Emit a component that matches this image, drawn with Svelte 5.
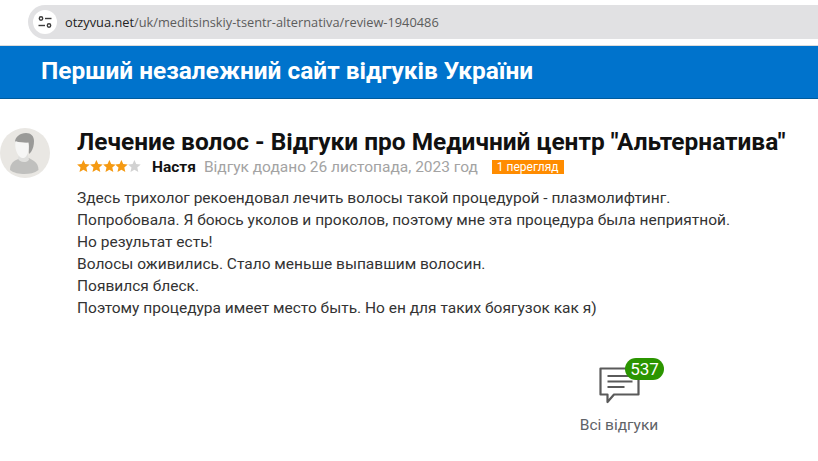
<script lang="ts">
	let paragraphs = [
		'Здесь трихолог рекоендовал лечить волосы такой процедурой - плазмолифтинг.',
		'Попробовала. Я боюсь уколов и проколов, поэтому мне эта процедура была неприятной.',
		'Но результат есть!',
		'Волосы оживились. Стало меньше выпавшим волосин.',
		'Появился блеск.',
		'Поэтому процедура имеет место быть. Но ен для таких боягузок как я)'
	];
	let rating = 4;
</script>

<div class="page">
	<div class="browser">
		<div class="urlbar">
			<span class="tune">
				<svg width="16" height="16" viewBox="0 0 16 16" fill="none" stroke="#3c3c3c" stroke-width="1.4">
					<circle cx="4" cy="4.500" r="1.7" />
					<path d="M8 4.500h6.500" />
					<path d="M1.500 11.500h6.500" />
					<circle cx="12" cy="11.500" r="1.7" />
				</svg>
			</span>
			<span class="url"><span class="host">otzyvua.net</span>/uk/meditsinskiy-tsentr-alternativa/review-1940486</span>
		</div>
	</div>

	<header class="banner">Перший незалежний сайт відгуків України</header>

	<main class="review">
		<div class="avatar">
			<svg width="50" height="50" viewBox="0 0 50 50">
				<circle cx="25" cy="25" r="25" fill="#e9e7e3" />
				<!-- shirt -->
				<path d="M10 42c0-5 2-8 6-10l5-2h8l5 3c3 2 4.500 5 4.500 9-4 3-9 4-14 4s-11-1-14.500-4z" fill="#c0c0be" />
				<path d="M18 30.500c1 4 9 5 11 1l-1.500-6h-8z" fill="#e0e0de" />
				<!-- hair -->
				<path d="M15 14c0-5 5-9 11-9 5 0 8 3 8 8 0 4-1 8-3 11l-2 2-1-11c-4 0-9-1-13-1z" fill="#9a9a98" />
				<!-- face -->
				<path d="M15.500 13c3 1.500 8 2 13 1.500 1 5 0 11-2.500 14-2 2-4.500 2-6.500 0-3-3-5-9-4-15.500z" fill="#f6f6f5" />
			</svg>
		</div>
		<div class="body">
			<h1>Лечение волос - Відгуки про Медичний центр "Альтернатива"</h1>
			<div class="meta">
				<span class="stars">
					{#each [1, 2, 3, 4, 5] as n}
						<svg width="12.800" height="12" viewBox="0 0 20 19" class:on={n <= rating}>
							<polygon points="10,0 12.900,6.500 20,7.200 14.600,11.900 16.200,19 10,15.300 3.800,19 5.400,11.900 0,7.200 7.100,6.500" />
						</svg>
					{/each}
				</span>
				<span class="author">Настя</span>
				<span class="date">Відгук додано 26 листопада, 2023 год</span>
				<span class="views">1 перегляд</span>
			</div>
			<div class="text">
				{#each paragraphs as p}
					<p>{p}</p>
				{/each}
			</div>
		</div>
	</main>

	<div class="all">
		<div class="bubble">
			<svg width="42" height="40" viewBox="0 0 42 40" fill="none" stroke="#5a5a5a">
				<path d="M1.500 3.500h38v26H15l-6.500 7.500v-7.500H1.500z" stroke-width="2.200" stroke-linejoin="round" />
				<path d="M8.500 11h25M8.500 16.500h25M8.500 22h17" stroke-width="2" />
			</svg>
			<span class="count">537</span>
		</div>
		<div class="label">Всі відгуки</div>
	</div>
</div>

<style>
	:global(body) {
		margin: 0;
		background: #fff;
	}
	.page {
		width: 818px;
		height: 461px;
		overflow: hidden;
		font-family: Roboto, 'Liberation Sans', sans-serif;
		color: #222;
	}
	.browser {
		height: 46px;
		box-sizing: border-box;
		padding: 5px 0 0 28px;
		border-bottom: 1px solid #dcdcdc;
	}
	.urlbar {
		height: 34px;
		background: #e1e1e3;
		border-radius: 17px 0 0 17px;
		display: flex;
		align-items: center;
		padding-left: 5px;
		gap: 8px;
	}
	.tune {
		width: 24px;
		height: 24px;
		background: #fff;
		border-radius: 50%;
		display: flex;
		align-items: center;
		justify-content: center;
	}
	.url {
		font-family: 'Open Sans', sans-serif;
		font-size: 12.800px;
		color: #5c5c5c;
	}
	.host {
		color: #222;
	}
	.banner {
		height: 53px;
		box-sizing: border-box;
		background: #0073cc;
		border-bottom: 1px solid #005c9e;
		color: #fff;
		font-size: 24.450px;
		font-weight: 700;
		line-height: 50px;
		padding-left: 41px;
	}
	.review {
		display: flex;
		padding-top: 29px;
	}
	.avatar {
		width: 50px;
		height: 50px;
		margin-right: 27px;
		flex-shrink: 0;
	}
	h1 {
		margin: 0;
		font-size: 24.450px;
		line-height: 28px;
		font-weight: 700;
		color: #111;
		white-space: nowrap;
	}
	.meta {
		display: flex;
		align-items: center;
		height: 20px;
		margin-top: 1px;
		font-size: 15.500px;
	}
	.stars {
		display: flex;
		width: 75px;
		margin-bottom: 2px;
	}
	.stars svg {
		fill: #d2d2d2;
		flex-shrink: 0;
	}
	.stars svg.on {
		fill: #f59a13;
	}
	.author {
		font-weight: 700;
		color: #111;
		margin-right: 8px;
	}
	.date {
		color: #a3a3a3;
		margin-right: 14px;
	}
	.views {
		background: #ff8c00;
		color: #fff;
		font-size: 12px;
		line-height: 14px;
		padding: 0 5px;
	}
	.text {
		margin-top: 10px;
		font-size: 15.500px;
		line-height: 22px;
		color: #333;
	}
	.text p {
		margin: 0;
		white-space: nowrap;
	}
	.all {
		width: 100px;
		margin: 46px 0 0 569px;
		display: flex;
		flex-direction: column;
		align-items: center;
	}
	.bubble {
		position: relative;
		width: 42px;
		height: 40px;
		margin-left: 2px;
	}
	.count {
		position: absolute;
		left: 26px;
		top: -7px;
		width: 39px;
		height: 22px;
		border-radius: 11px;
		background: #2b9500;
		color: #fff;
		font-size: 17px;
		line-height: 22px;
		text-align: center;
	}
	.label {
		margin-top: 11px;
		font-size: 15.500px;
		color: #5f6368;
	}
</style>
